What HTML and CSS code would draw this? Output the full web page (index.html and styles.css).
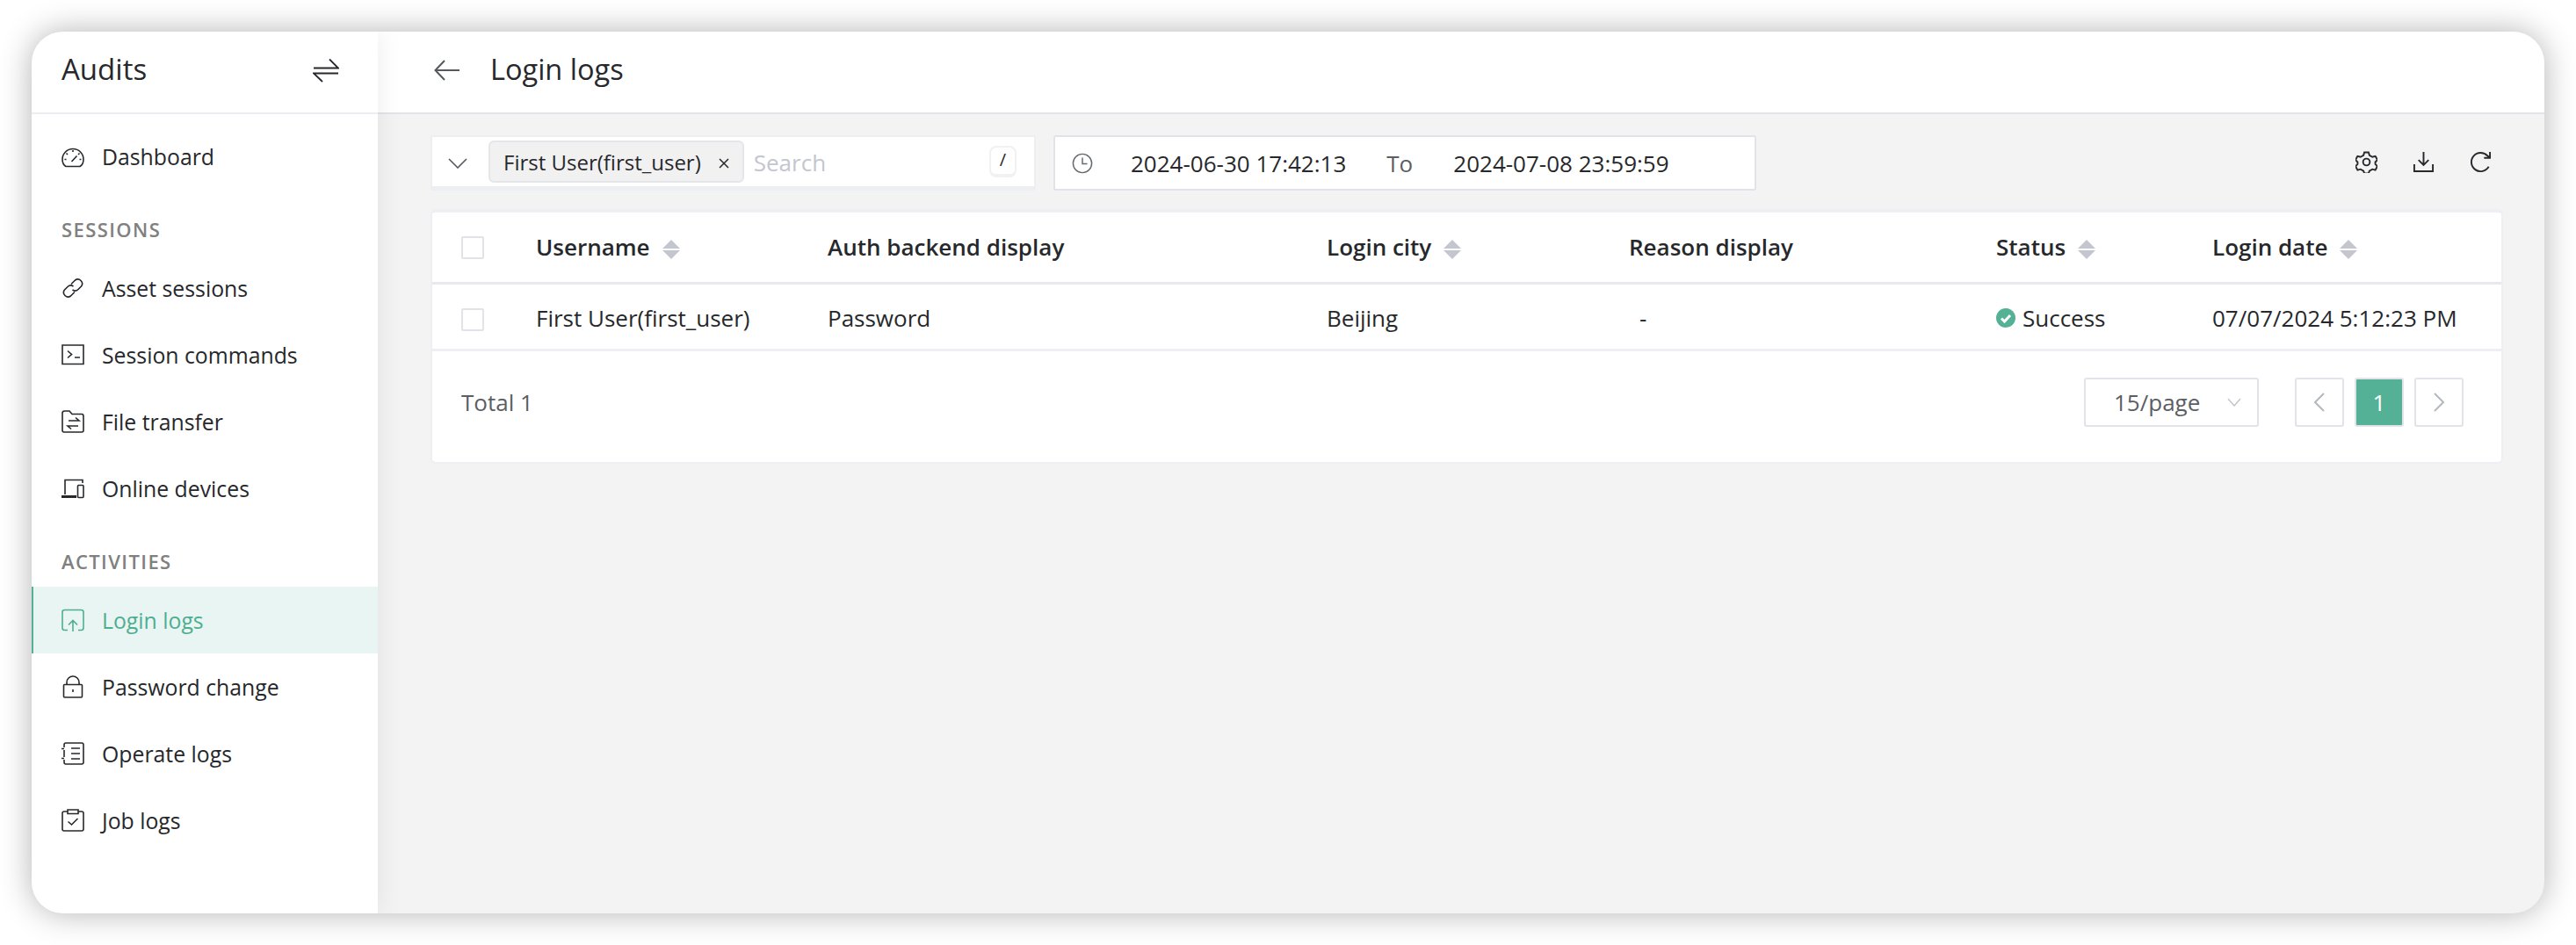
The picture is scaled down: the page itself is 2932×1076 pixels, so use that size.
FILE: index.html
```html
<!DOCTYPE html>
<html lang="en">
<head>
    <meta charset="UTF-8">
    <meta name="viewport" content="width=device-width, initial-scale=1.0">
    <title>Login logs</title>
    <link rel="stylesheet" href="styles.css">
</head>
<body>
    <div class="window">
        <aside class="sidebar">
            <div class="side-head">
                <span class="side-title">Audits</span>
                <svg class="swap" viewBox="0 0 30 28"><path d="M1 11.500H29L19 1.500M29 17.500H1L11 27"/></svg>
            </div>
            <nav class="side-nav">
                <a class="nav-item">
                    <svg class="ico" viewBox="0 0 26 26"><path d="M5 24.500h16c2.500-1.500 4-4.500 4-8a12 12 0 0 0-24 0c0 3.500 1.500 6.500 4 8zM13 6v2M5.500 9.500l1.500 1.500M20.500 9.500 19 11M3.500 16.500h2M20.500 16.500h2M11.500 19l6-6.500"/></svg>
                    Dashboard
                </a>
                <div class="nav-label">SESSIONS</div>
                <a class="nav-item">
                    <svg class="ico" viewBox="0 0 26 26"><path d="M11 8.500l4.500-4.500a5 5 0 0 1 7 7L19 14.500a5 5 0 0 1-6.500.500M15 17.500 10.500 22a5 5 0 0 1-7-7L7 11.500a5 5 0 0 1 6.500-.500"/></svg>
                    Asset sessions
                </a>
                <a class="nav-item">
                    <svg class="ico" viewBox="0 0 26 26"><path d="M1 2h24v21.500H1zM7 8.500l4.500 4-4.500 4M15 16h6"/></svg>
                    Session commands
                </a>
                <a class="nav-item">
                    <svg class="ico" viewBox="0 0 26 26"><path d="M1 3.500Q1 1 3.500 1h5.500l3 3.500h11Q25 4.500 25 7v16q0 2-2 2H3q-2 0-2-2zM8 12h12l-4-3.500M19 18H7l4 3.500"/></svg>
                    File transfer
                </a>
                <a class="nav-item">
                    <svg class="ico" viewBox="0 0 26 26"><path d="M4 20V3.500h20V7"/><path class="thick" d="M0 22.500h17"/><rect x="18.500" y="9.500" width="6.500" height="14" rx="1"/></svg>
                    Online devices
                </a>
                <div class="nav-label">ACTIVITIES</div>
                <a class="nav-item active">
                    <svg class="ico" viewBox="0 0 26 26"><path d="M7 24.500H3.500Q1 24.500 1 22V4q0-2.500 2.500-2.500h19Q25 1.500 25 4v18q0 2.500-2.500 2.500H19M13 26V14M8 18.500l5-5 5 5"/></svg>
                    Login logs
                </a>
                <a class="nav-item">
                    <svg class="ico" viewBox="0 0 26 26"><path d="M3.500 10.500h19a1 1 0 0 1 1 1v12.500a1 1 0 0 1-1 1h-19a1 1 0 0 1-1-1V11.500a1 1 0 0 1 1-1zM6 10.500V8a7 7 0 0 1 14 0v2.500M13 16v3"/></svg>
                    Password change
                </a>
                <a class="nav-item">
                    <svg class="ico" viewBox="0 0 26 26"><path d="M3 6V3q0-2 2-2h18q2 0 2 2v20q0 2-2 2H5q-2 0-2-2v-3M3 9v8M0 7.500h3M0 18.500h3M11 7h10M11 13h10M11 19h10"/></svg>
                    Operate logs
                </a>
                <a class="nav-item">
                    <svg class="ico" viewBox="0 0 26 26"><path d="M7 3H3q-2 0-2 2v18q0 2 2 2h20q2 0 2-2V5q0-2-2-2h-4M7 1h12v4.500H7zM7.500 14.500l4 3.500 7-7"/></svg>
                    Job logs
                </a>
            </nav>
        </aside>
        <main class="main">
            <header class="main-head">
                <svg class="back" viewBox="0 0 30 26"><path d="M29 13H2M12 2 1.500 13 12 24"/></svg>
                <h1>Login logs</h1>
            </header>
            <div class="content">
                <div class="toolbar">
                    <div class="search-box">
                        <svg class="chevron" viewBox="0 0 22 12"><path d="M1 1l10 10L21 1"/></svg>
                        <span class="tag">First User(first_user)<svg class="tag-x" viewBox="0 0 12 12"><path d="M1 1l10 10M11 1 1 11"/></svg></span>
                        <span class="placeholder">Search</span>
                        <span class="kbd">/</span>
                    </div>
                    <div class="date-box">
                        <svg class="clock" viewBox="0 0 26 26"><circle cx="13" cy="13" r="11.500"/><path d="M13 6v7.500h6"/></svg>
                        <span class="date">2024-06-30 17:42:13</span>
                        <span class="date-to">To</span>
                        <span class="date">2024-07-08 23:59:59</span>
                    </div>
                    <div class="tools">
                        <svg class="tool" viewBox="0 0 26 26"><path d="M10.500 1.500h5l1 3.500 3.500 2 3.500-1 2.500 4.500-2.500 2.500v2.500l2.500 2.500-2.500 4.500-3.500-1-3.500 2-1 3h-5l-1-3-3.500-2-3.500 1-2.500-4.500 2.500-2.500v-2.500l-2.500-2.500 2.500-4.500 3.500 1 3.500-2z"/><circle cx="13" cy="13" r="4"/></svg>
                        <svg class="tool" viewBox="0 0 26 26"><path d="M13 1v15M7 10.500l6 6 6-6M2 15.500V24h22v-8.500"/></svg>
                        <svg class="tool" viewBox="0 0 26 26"><path d="M22.500 18.500A11 11 0 1 1 21 5.500L24 8M24 1v7h-7"/></svg>
                    </div>
                </div>
                <section class="card">
                    <div class="row row-head">
                        <span class="check"></span>
                        <span>Username<i class="sort"></i></span>
                        <span>Auth backend display</span>
                        <span>Login city<i class="sort"></i></span>
                        <span>Reason display</span>
                        <span>Status<i class="sort"></i></span>
                        <span>Login date<i class="sort"></i></span>
                    </div>
                    <div class="row row-body">
                        <span class="check"></span>
                        <span>First User(first_user)</span>
                        <span>Password</span>
                        <span>Beijing</span>
                        <span class="dash">-</span>
                        <span class="status">
                            <svg class="ok" viewBox="0 0 22 22"><circle cx="11" cy="11" r="11"/><path d="M6 11.500l3.500 3.500L16 8"/></svg>
                            Success
                        </span>
                        <span>07/07/2024 5:12:23 PM</span>
                    </div>
                    <div class="card-foot">
                        <span class="total">Total 1</span>
                        <div class="pager">
                            <div class="page-size">15/page<svg class="size-arrow" viewBox="0 0 16 10"><path d="M1 1l7 8 7-8"/></svg></div>
                            <button class="page-btn"><svg viewBox="0 0 12 22"><path d="M11 1 1 11l10 10"/></svg></button>
                            <button class="page-btn current">1</button>
                            <button class="page-btn"><svg viewBox="0 0 12 22"><path d="M1 1l10 10L1 21"/></svg></button>
                        </div>
                    </div>
                </section>
            </div>
        </main>
    </div>
</body>
</html>
```
FILE: styles.css
```css
* {
    box-sizing: border-box;
}

html, body {
    height: 100%;
}

body {
    margin: 0;
    padding: 36px;
    background: #fff;
    color: #26282b;
    font-family: 'Open Sans', sans-serif;
    font-size: 26px;
    overflow: hidden;
}

svg {
    fill: none;
    stroke: currentColor;
    stroke-width: 2;
    flex: none;
}

.window {
    display: flex;
    height: 1004px;
    border-radius: 36px;
    overflow: hidden;
    background: #f3f3f4;
    box-shadow: 0 0 36px rgba(0, 0, 0, 0.3);
}

/* sidebar */
.sidebar {
    position: relative;
    z-index: 1;
    width: 394px;
    flex: none;
    background: #fff;
    box-shadow: 0 0 28px rgba(0, 0, 0, 0.08);
}

.side-head {
    display: flex;
    align-items: center;
    justify-content: space-between;
    height: 94px;
    padding: 0 44px 2px 34px;
    border-bottom: 2px solid #ecedf1;
}

.side-title {
    margin-top: -5px;
    font-size: 33px;
}

.swap {
    width: 30px;
    height: 28px;
    margin-top: -3px;
    stroke-width: 1.800;
}

.side-nav {
    padding-top: 10px;
}

.nav-item {
    display: flex;
    align-items: center;
    gap: 20px;
    height: 76px;
    padding-left: 32px;
    border-left: 2px solid transparent;
    font-size: 24.800px;
}

.nav-item.active {
    background: #e9f5f2;
    border-left-color: #55b195;
    color: #4fae92;
}

.nav-label {
    height: 74px;
    padding: 29px 0 0 34px;
    color: #808080;
    font-size: 22px;
    font-weight: 600;
    line-height: 32px;
    letter-spacing: 1.400px;
}

.ico {
    width: 26px;
    height: 26px;
    stroke-width: 1.600;
}

.thick {
    stroke-width: 3;
}

/* main */
.main {
    flex: 1;
    min-width: 0;
}

.main-head {
    display: flex;
    align-items: center;
    gap: 34px;
    height: 94px;
    padding: 0 0 2px 64px;
    background: #fff;
    border-bottom: 2px solid #e2e3e6;
}

.back {
    width: 30px;
    height: 26px;
    margin-top: -3px;
    color: #55585e;
}

h1 {
    margin: -5px 0 0;
    font-size: 32.500px;
    font-weight: 400;
}

.content {
    padding: 24px 46px 0 60px;
}

.toolbar {
    display: flex;
    align-items: flex-start;
    gap: 20px;
}

.search-box {
    display: flex;
    align-items: center;
    width: 689px;
    height: 63px;
    padding: 4px 20px 0 18px;
    background: #fff;
    border: 2px solid #eceef2;
    border-bottom-width: 5px;
    border-radius: 2px;
}

.chevron {
    width: 22px;
    height: 12px;
    margin-right: 24px;
    color: #55585e;
    stroke-width: 1.600;
}

.tag {
    display: flex;
    align-items: center;
    gap: 20px;
    height: 48px;
    margin-top: -4px;
    padding: 0 15px;
    background: #f1f1f2;
    border: 2px solid #e5e6e9;
    border-radius: 6px;
    font-size: 24px;
}

.tag-x {
    width: 12px;
    height: 12px;
    margin-top: 4px;
    stroke-width: 1.500;
}

.placeholder {
    flex: 1;
    margin: -3px 0 0 11px;
    color: #c3c6cf;
}

.kbd {
    width: 31px;
    height: 36px;
    margin-top: -4px;
    border: 2px solid #f1f1f3;
    border-bottom-width: 4px;
    border-radius: 8px;
    font-size: 20px;
    line-height: 28px;
    text-align: center;
}

.date-box {
    display: flex;
    align-items: center;
    width: 800px;
    height: 63px;
    padding-left: 19px;
    background: #fff;
    border: 2px solid #e2e3e8;
    border-radius: 3px;
}

.clock {
    width: 24px;
    height: 24px;
    margin-right: 43px;
    color: #66696f;
    stroke-width: 1.600;
}

.date-to {
    width: 122px;
    padding-left: 46px;
    color: #5b5e63;
}

.tools {
    display: flex;
    gap: 40px;
    margin-left: auto;
    padding: 18px 14px 0 0;
}

.tool {
    width: 25px;
    height: 25px;
}

/* table card */
.card {
    width: 2359px;
    margin-top: 21px;
    background: #fff;
    border: 2px solid #eeeff3;
    border-top-width: 4px;
    border-radius: 6px;
}

.row {
    display: grid;
    grid-template-columns: 85px 332px 568px 344px 418px 246px 1fr;
    align-items: center;
    padding-left: 33px;
}

.row-head {
    height: 82px;
    padding-bottom: 2px;
    border-bottom: 3px solid #e8e9ec;
    font-weight: 600;
}

.row-body {
    height: 76px;
    padding-top: 3px;
    border-bottom: 3px solid #eeeff3;
}

.check {
    width: 26px;
    height: 26px;
    background: #fff;
    border: 2px solid #e2e3e8;
    border-radius: 2px;
}

.row-body .check {
    margin-top: 4px;
}

.row-head .check {
    margin-top: 2px;
}

.sort {
    display: inline-block;
    position: relative;
    width: 20px;
    height: 22px;
    margin-left: 14px;
    vertical-align: -4px;
}

.sort::before, .sort::after {
    content: "";
    position: absolute;
    left: 0;
    border-left: 10px solid transparent;
    border-right: 10px solid transparent;
}

.sort::before {
    top: 0;
    border-bottom: 10px solid #c3c6cf;
}

.sort::after {
    bottom: 0;
    border-top: 10px solid #c3c6cf;
}

.dash {
    padding-left: 12px;
}

.status {
    display: flex;
    align-items: center;
    gap: 8px;
}

.ok {
    width: 22px;
    height: 22px;
    fill: #55b195;
    stroke: none;
}

.ok path {
    fill: none;
    stroke: #fff;
    stroke-width: 3;
}

.card-foot {
    display: flex;
    justify-content: space-between;
    align-items: center;
    height: 126px;
    padding: 0 43px 10px 33px;
}

.total {
    color: #5b5e63;
}

.pager {
    display: flex;
    gap: 12px;
}

.page-size {
    display: flex;
    align-items: center;
    justify-content: space-between;
    width: 199px;
    height: 56px;
    margin-right: 29px;
    padding: 0 18px 0 32px;
    border: 2px solid #e2e3e8;
    border-radius: 3px;
    color: #5b5e63;
}

.size-arrow {
    width: 16px;
    height: 10px;
    color: #c3c6cf;
    stroke-width: 1.500;
}

.page-btn {
    display: flex;
    align-items: center;
    justify-content: center;
    width: 56px;
    height: 56px;
    padding: 0;
    background: #fff;
    border: 2px solid #e2e3e8;
    border-radius: 3px;
    color: #b5b8c0;
    font-family: inherit;
    font-size: 26px;
}

.page-btn svg {
    width: 12px;
    height: 22px;
}

.page-btn.current {
    background: #55b195;
    color: #fff;
}
```
